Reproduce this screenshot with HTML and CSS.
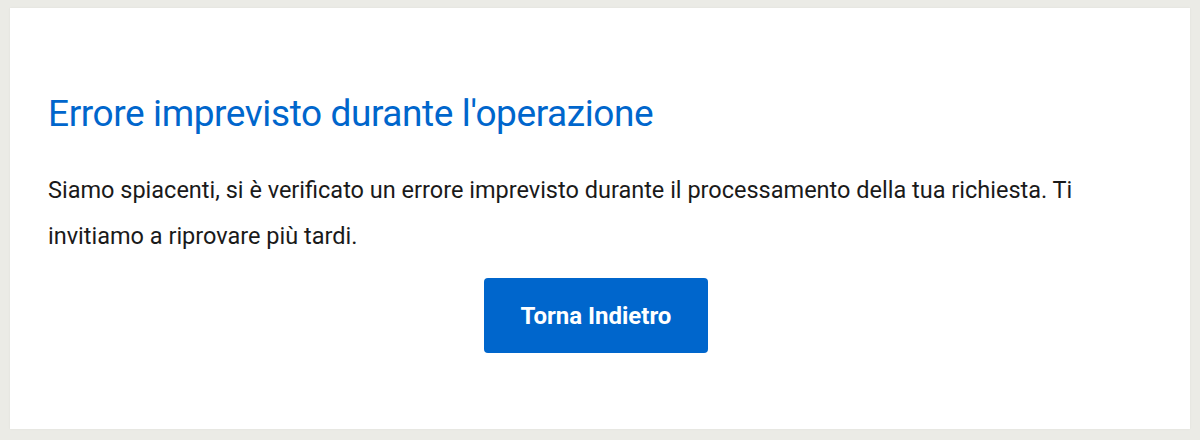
FILE: index.html
```html
<!DOCTYPE html>
<html lang="it">
<head>
<meta charset="utf-8">
<title>Errore</title>
<link rel="stylesheet" href="styles.css">
</head>
<body>
<main class="card">
  <h2 class="title">Errore imprevisto durante l'operazione</h2>
  <p class="message">Siamo spiacenti, si è verificato un errore imprevisto durante il processamento della tua richiesta. Ti invitiamo a riprovare più tardi.</p>
  <div class="actions">
    <button class="btn-primary" type="button">Torna Indietro</button>
  </div>
</main>
</body>
</html>
```
FILE: styles.css
```css
html, body {
  margin: 0;
  padding: 0;
}
body {
  background: #ebebe6;
  font-family: Roboto, "Noto Sans", sans-serif;
  padding: 8px 10px 11px 10px;
  height: 440px;
  box-sizing: border-box;
}
.card {
  background: #ffffff;
  height: 100%;
  box-sizing: border-box;
  padding: 82px 40px 0 38px;
  box-shadow: 0 0 2px rgba(0,0,0,0.06);
}
.title {
  margin: 0;
  font-weight: 400;
  font-size: 37px;
  line-height: 48px;
  color: #0066cc;
  letter-spacing: -0.4px;
}
.message {
  margin: 29px 0 0 0;
  font-size: 23.5px;
  line-height: 46px;
  color: #1a1a1a;
}
.actions {
  display: flex;
  justify-content: center;
  margin-top: 19px;
  padding-right: 6px;
}
.btn-primary {
  width: 224px;
  height: 75px;
  border: 0;
  border-radius: 4px;
  background: #0066cc;
  color: #ffffff;
  font-family: inherit;
  font-weight: 700;
  font-size: 24px;
}
```
